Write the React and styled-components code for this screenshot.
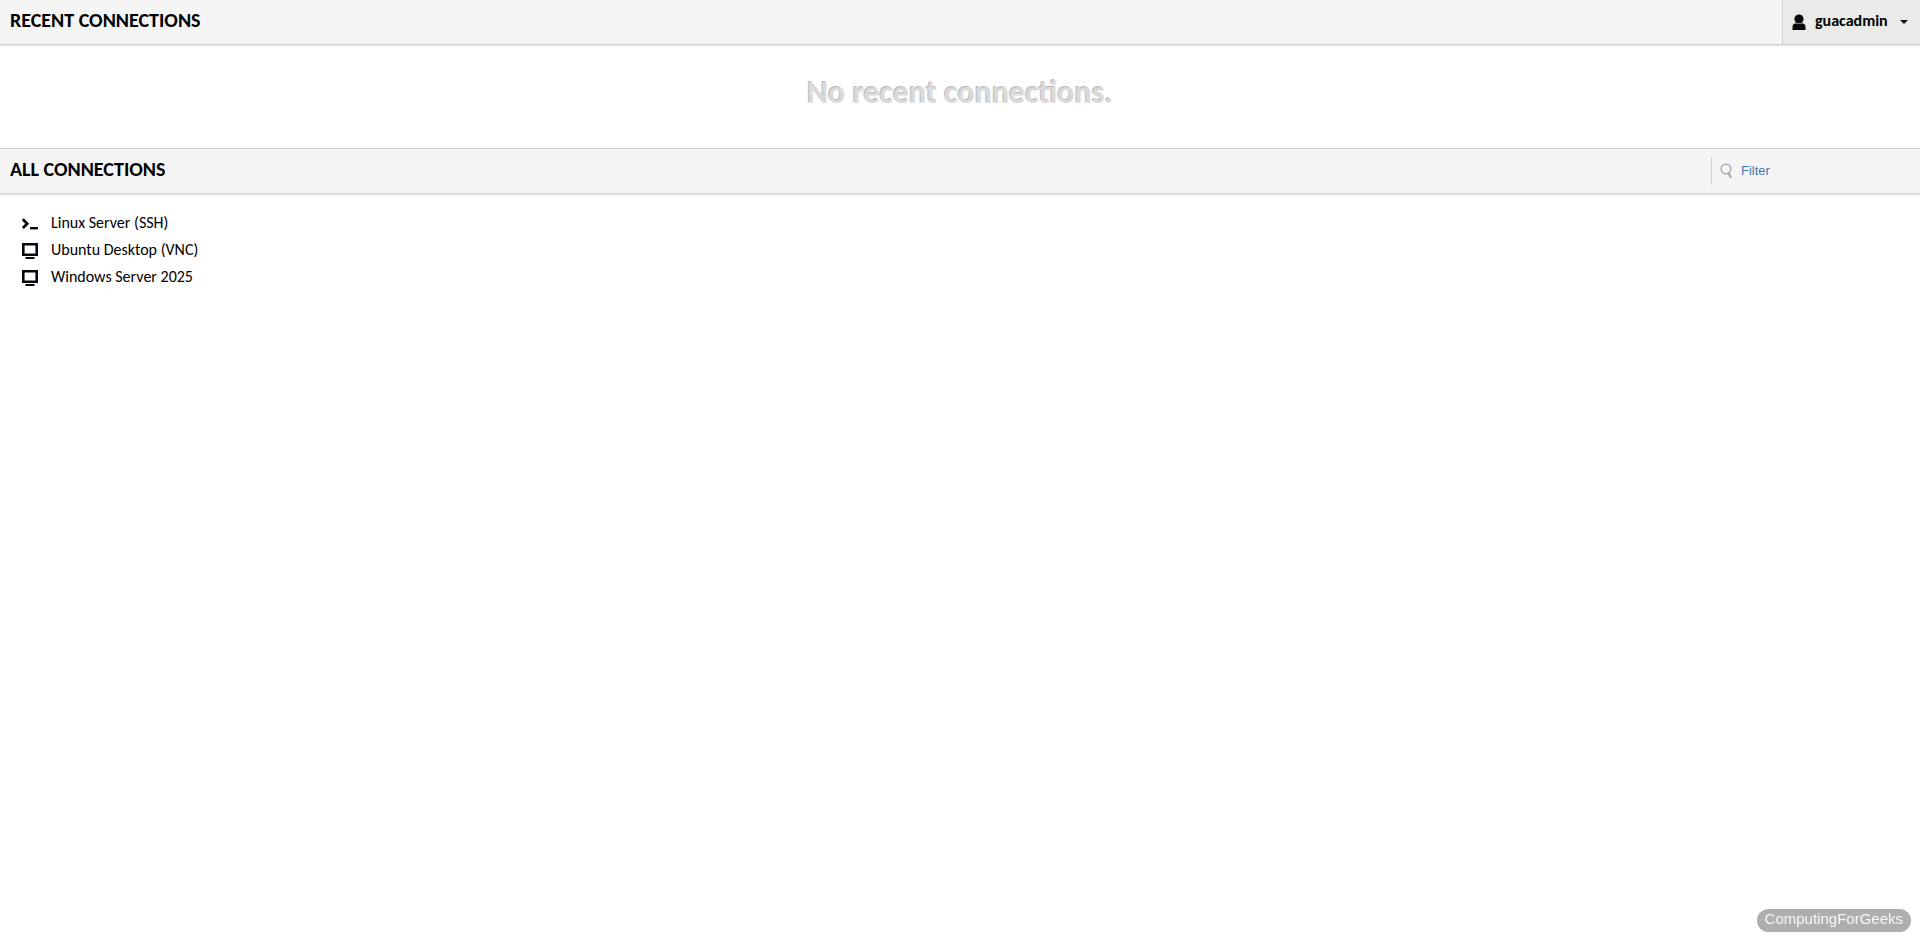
import React, { useState } from "react";
import styled, { createGlobalStyle } from "styled-components";

const GlobalStyle = createGlobalStyle`
  * {
    box-sizing: border-box;
  }
  body {
    margin: 0;
    background: #fff;
    color: #000;
    font-family: Carlito, Lato, "Liberation Sans", sans-serif;
    font-size: 16px;
  }
`;

const Header = styled.header`
  display: flex;
  align-items: stretch;
  justify-content: space-between;
  height: ${props => (props.$first ? "45px" : "46px")};
  background: #f5f5f5;
  border-top: ${props => (props.$first ? "none" : "1px solid #d3d3d3")};
  border-bottom: 1px solid #d3d3d3;
  box-shadow: 0 1px 2px rgba(0, 0, 0, 0.12);
`;

const Title = styled.h2`
  margin: 0;
  padding: 0 10px;
  font-size: 20px;
  line-height: 40px;
  font-weight: bold;
  text-transform: uppercase;
`;

const UserMenu = styled.button`
  display: flex;
  align-items: center;
  width: 138px;
  padding: 0 12px 0 9px;
  border: none;
  border-left: 1px solid #d3d3d3;
  background: #eaeae8;
  color: #000;
  font-family: inherit;
  font-size: 16px;
  font-weight: bold;
  cursor: pointer;
`;

const UserName = styled.span`
  flex: 1;
  padding: 0 0 4px 9px;
  text-align: left;
`;

const Placeholder = styled.p`
  margin: 0;
  padding: 28px 0 36px;
  color: #dadada;
  font-size: 32px;
  line-height: 39px;
  font-weight: bold;
  text-align: center;
  text-shadow: -1px -1px 0 #bbb;
`;

const Filter = styled.label`
  display: flex;
  align-items: center;
  align-self: center;
  width: 209px;
  height: 28px;
  padding-left: 8px;
  border-left: 1px solid #d3d3d3;
`;

const FilterInput = styled.input`
  flex: 1;
  min-width: 0;
  padding: 0 0 2px 8px;
  border: none;
  outline: none;
  background: transparent;
  font-family: "Liberation Sans", Arial, sans-serif;
  font-size: 13px;
  &::placeholder {
    color: #4278b0;
    opacity: 1;
  }
`;

const ConnectionList = styled.ul`
  margin: 0;
  padding: 15px 22px;
  list-style: none;
`;

const Connection = styled.a`
  display: flex;
  align-items: center;
  gap: 13px;
  width: max-content;
  height: 27px;
  color: #000;
  font-size: 16px;
  text-decoration: none;
`;

const Watermark = styled.div`
  position: fixed;
  right: 9px;
  bottom: 9px;
  padding: 0 8px 3px;
  border-radius: 12px;
  background: #aeaeae;
  color: #f6f6f6;
  font-family: "Liberation Sans", Arial, sans-serif;
  font-size: 15px;
  line-height: 20px;
`;

const UserIcon = () => (
  <svg width="14" height="16" viewBox="0 0 14 16" aria-hidden="true">
    <circle cx="7" cy="5" r="4.6" fill="#0b0610" />
    <path d="M.5 16v-3.2q0-3 3.2-3.6 3.3 1.6 6.6 0 3.2.6 3.2 3.6V16z" fill="#0b0610" />
  </svg>
);

const CaretIcon = () => (
  <svg width="8" height="4" viewBox="0 0 8 4" aria-hidden="true">
    <path d="M0 0h8L4 4z" fill="#0b0610" />
  </svg>
);

const SearchIcon = () => (
  <svg width="13" height="16" viewBox="0 0 13 16" fill="none" stroke="#aaa" aria-hidden="true">
    <circle cx="6" cy="6" r="4.8" strokeWidth="1.5" />
    <path d="M8.3 9.5l2.8 5.2" strokeWidth="2.2" />
  </svg>
);

const TerminalIcon = () => (
  <svg width="16" height="16" viewBox="0 0 16 16" aria-hidden="true">
    <path d="M.8 4.3l4.4 4.4L.8 13.1" fill="none" stroke="#0b0610" strokeWidth="2.8" />
    <rect x="8" y="12" width="8" height="2.4" fill="#0b0610" />
  </svg>
);

const MonitorIcon = () => (
  <svg width="16" height="18" viewBox="0 0 16 18" aria-hidden="true">
    <path d="M0 2h16v13H0zM2.6 4.6v7.8h10.8V4.6z" fill="#0b0610" fillRule="evenodd" />
    <rect x="3.5" y="16" width="9" height="2" fill="#0b0610" />
  </svg>
);

const connections = [
  { name: "Linux Server (SSH)", Icon: TerminalIcon },
  { name: "Ubuntu Desktop (VNC)", Icon: MonitorIcon },
  { name: "Windows Server 2025", Icon: MonitorIcon }
];

export default function App() {
  const [filter, setFilter] = useState("");
  const visible = connections.filter(({ name }) =>
    name.toLowerCase().includes(filter.toLowerCase())
  );

  return (
    <>
      <GlobalStyle />
      <Header $first>
        <Title>Recent Connections</Title>
        <UserMenu type="button" aria-haspopup="menu">
          <UserIcon />
          <UserName>guacadmin</UserName>
          <CaretIcon />
        </UserMenu>
      </Header>
      <Placeholder>No recent connections.</Placeholder>
      <Header>
        <Title>All Connections</Title>
        <Filter>
          <SearchIcon />
          <FilterInput
            type="text"
            aria-label="Filter"
            placeholder="Filter"
            value={filter}
            onChange={e => setFilter(e.target.value)}
          />
        </Filter>
      </Header>
      <ConnectionList>
        {visible.map(({ name, Icon }) => (
          <li key={name}>
            <Connection href="#">
              <Icon />
              {name}
            </Connection>
          </li>
        ))}
      </ConnectionList>
      <Watermark>ComputingForGeeks</Watermark>
    </>
  );
}
